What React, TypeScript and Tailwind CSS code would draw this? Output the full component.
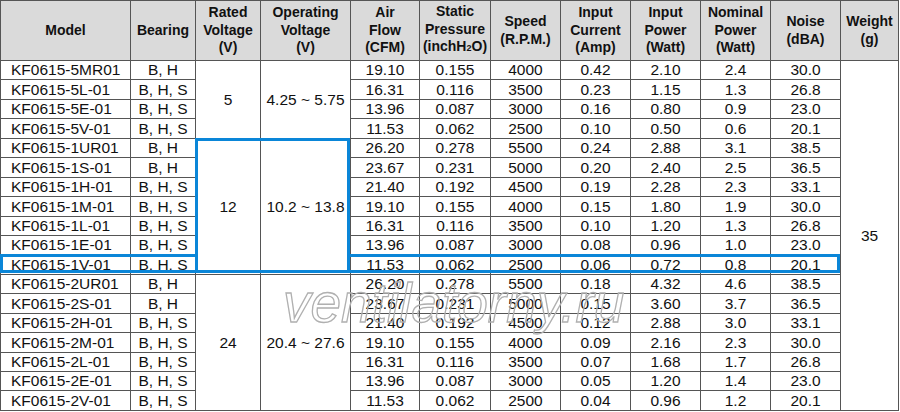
import React from "react";

type Row = [string, string, string, string, string, string, string, string, string];

const g5: Row[] = [
  ["KF0615-5MR01", "B, H", "19.10", "0.155", "4000", "0.42", "2.10", "2.4", "30.0"],
  ["KF0615-5L-01", "B, H, S", "16.31", "0.116", "3500", "0.23", "1.15", "1.3", "26.8"],
  ["KF0615-5E-01", "B, H, S", "13.96", "0.087", "3000", "0.16", "0.80", "0.9", "23.0"],
  ["KF0615-5V-01", "B, H, S", "11.53", "0.062", "2500", "0.10", "0.50", "0.6", "20.1"],
];
const g12: Row[] = [
  ["KF0615-1UR01", "B, H", "26.20", "0.278", "5500", "0.24", "2.88", "3.1", "38.5"],
  ["KF0615-1S-01", "B, H", "23.67", "0.231", "5000", "0.20", "2.40", "2.5", "36.5"],
  ["KF0615-1H-01", "B, H, S", "21.40", "0.192", "4500", "0.19", "2.28", "2.3", "33.1"],
  ["KF0615-1M-01", "B, H, S", "19.10", "0.155", "4000", "0.15", "1.80", "1.9", "30.0"],
  ["KF0615-1L-01", "B, H, S", "16.31", "0.116", "3500", "0.10", "1.20", "1.3", "26.8"],
  ["KF0615-1E-01", "B, H, S", "13.96", "0.087", "3000", "0.08", "0.96", "1.0", "23.0"],
  ["KF0615-1V-01", "B, H, S", "11.53", "0.062", "2500", "0.06", "0.72", "0.8", "20.1"],
];
const g24: Row[] = [
  ["KF0615-2UR01", "B, H", "26.20", "0.278", "5500", "0.18", "4.32", "4.6", "38.5"],
  ["KF0615-2S-01", "B, H", "23.67", "0.231", "5000", "0.15", "3.60", "3.7", "36.5"],
  ["KF0615-2H-01", "B, H, S", "21.40", "0.192", "4500", "0.12", "2.88", "3.0", "33.1"],
  ["KF0615-2M-01", "B, H, S", "19.10", "0.155", "4000", "0.09", "2.16", "2.3", "30.0"],
  ["KF0615-2L-01", "B, H, S", "16.31", "0.116", "3500", "0.07", "1.68", "1.7", "26.8"],
  ["KF0615-2E-01", "B, H, S", "13.96", "0.087", "3000", "0.05", "1.20", "1.4", "23.0"],
  ["KF0615-2V-01", "B, H, S", "11.53", "0.062", "2500", "0.04", "0.96", "1.2", "20.1"],
];

const td = "border border-[#555] p-0 text-center align-middle whitespace-nowrap";
const th = "border border-[#555] p-0 text-center align-middle font-bold text-[14px] leading-[17.5px] bg-[#dadada]";

function Group({
  rows,
  rated,
  op,
  first,
}: {
  rows: Row[];
  rated: string;
  op: string;
  first?: boolean;
}) {
  return (
    <>
      {rows.map((r, i) => (
        <tr key={r[0]} className="h-[19.44px]">
          <td className={`${td} text-left pl-[10px]`}>{r[0]}</td>
          <td className={td}>{r[1]}</td>
          {i === 0 && (
            <>
              <td className={td} rowSpan={rows.length}>
                {rated}
              </td>
              <td className={td} rowSpan={rows.length}>
                {op}
              </td>
            </>
          )}
          {r.slice(2).map((v, k) => (
            <td key={k} className={td}>
              {v}
            </td>
          ))}
          {first && i === 0 && (
            <td className={td} rowSpan={18}>
              35
            </td>
          )}
        </tr>
      ))}
    </>
  );
}

export default function App() {
  const widths = [130, 65, 65, 90, 69, 71, 70, 70, 70, 70, 70, 58];
  return (
    <div className="w-[900px] h-[412px] bg-white overflow-hidden font-['Liberation_Sans',Arial,sans-serif] text-[#111]">
      <div className="relative w-[899px]">
        <table className="table-fixed border-collapse w-[899px] text-[15.5px] leading-none border border-[#444]">
          <colgroup>
            {widths.map((w, i) => (
              <col key={i} style={{ width: w }} />
            ))}
          </colgroup>
          <thead>
            <tr className="h-[60px]">
              <th className={th}>Model</th>
              <th className={th}>Bearing</th>
              <th className={th}>
                Rated
                <br />
                Voltage
                <br />
                (V)
              </th>
              <th className={th}>
                Operating
                <br />
                Voltage
                <br />
                (V)
              </th>
              <th className={th}>
                Air
                <br />
                Flow
                <br />
                (CFM)
              </th>
              <th className={th}>
                Static
                <br />
                Pressure
                <br />
                (inchH<span className="text-[9px]">2</span>O)
              </th>
              <th className={th}>
                Speed
                <br />
                (R.P.M.)
              </th>
              <th className={th}>
                Input
                <br />
                Current
                <br />
                (Amp)
              </th>
              <th className={th}>
                Input
                <br />
                Power
                <br />
                (Watt)
              </th>
              <th className={th}>
                Nominal
                <br />
                Power
                <br />
                (Watt)
              </th>
              <th className={th}>
                Noise
                <br />
                (dBA)
              </th>
              <th className={th}>
                Weight
                <br />
                (g)
              </th>
            </tr>
          </thead>
          <tbody>
            <Group rows={g5} rated="5" op="4.25 ~ 5.75" first />
            <Group rows={g12} rated="12" op="10.2 ~ 13.8" />
            <Group rows={g24} rated="24" op="20.4 ~ 27.6" />
          </tbody>
        </table>

        {/* blue highlight outlines */}
        <div className="absolute left-[195px] top-[138px] w-[155px] h-[135px] border-[3px] border-[#0a86d8] pointer-events-none" />
        <div className="absolute left-0 top-[254px] w-[198px] h-[19px] border-[3px] border-r-0 border-[#0a86d8] pointer-events-none" />
        <div className="absolute left-[347px] top-[254px] w-[493px] h-[19px] border-[3px] border-l-0 border-[#0a86d8] pointer-events-none" />

        {/* watermark */}
        <div className="absolute left-[283px] top-[276px] text-[55px] leading-none italic text-transparent [-webkit-text-stroke:1.3px_#b0b0b0] pointer-events-none whitespace-nowrap">
          ventilatorny.ru
        </div>
      </div>
    </div>
  );
}
